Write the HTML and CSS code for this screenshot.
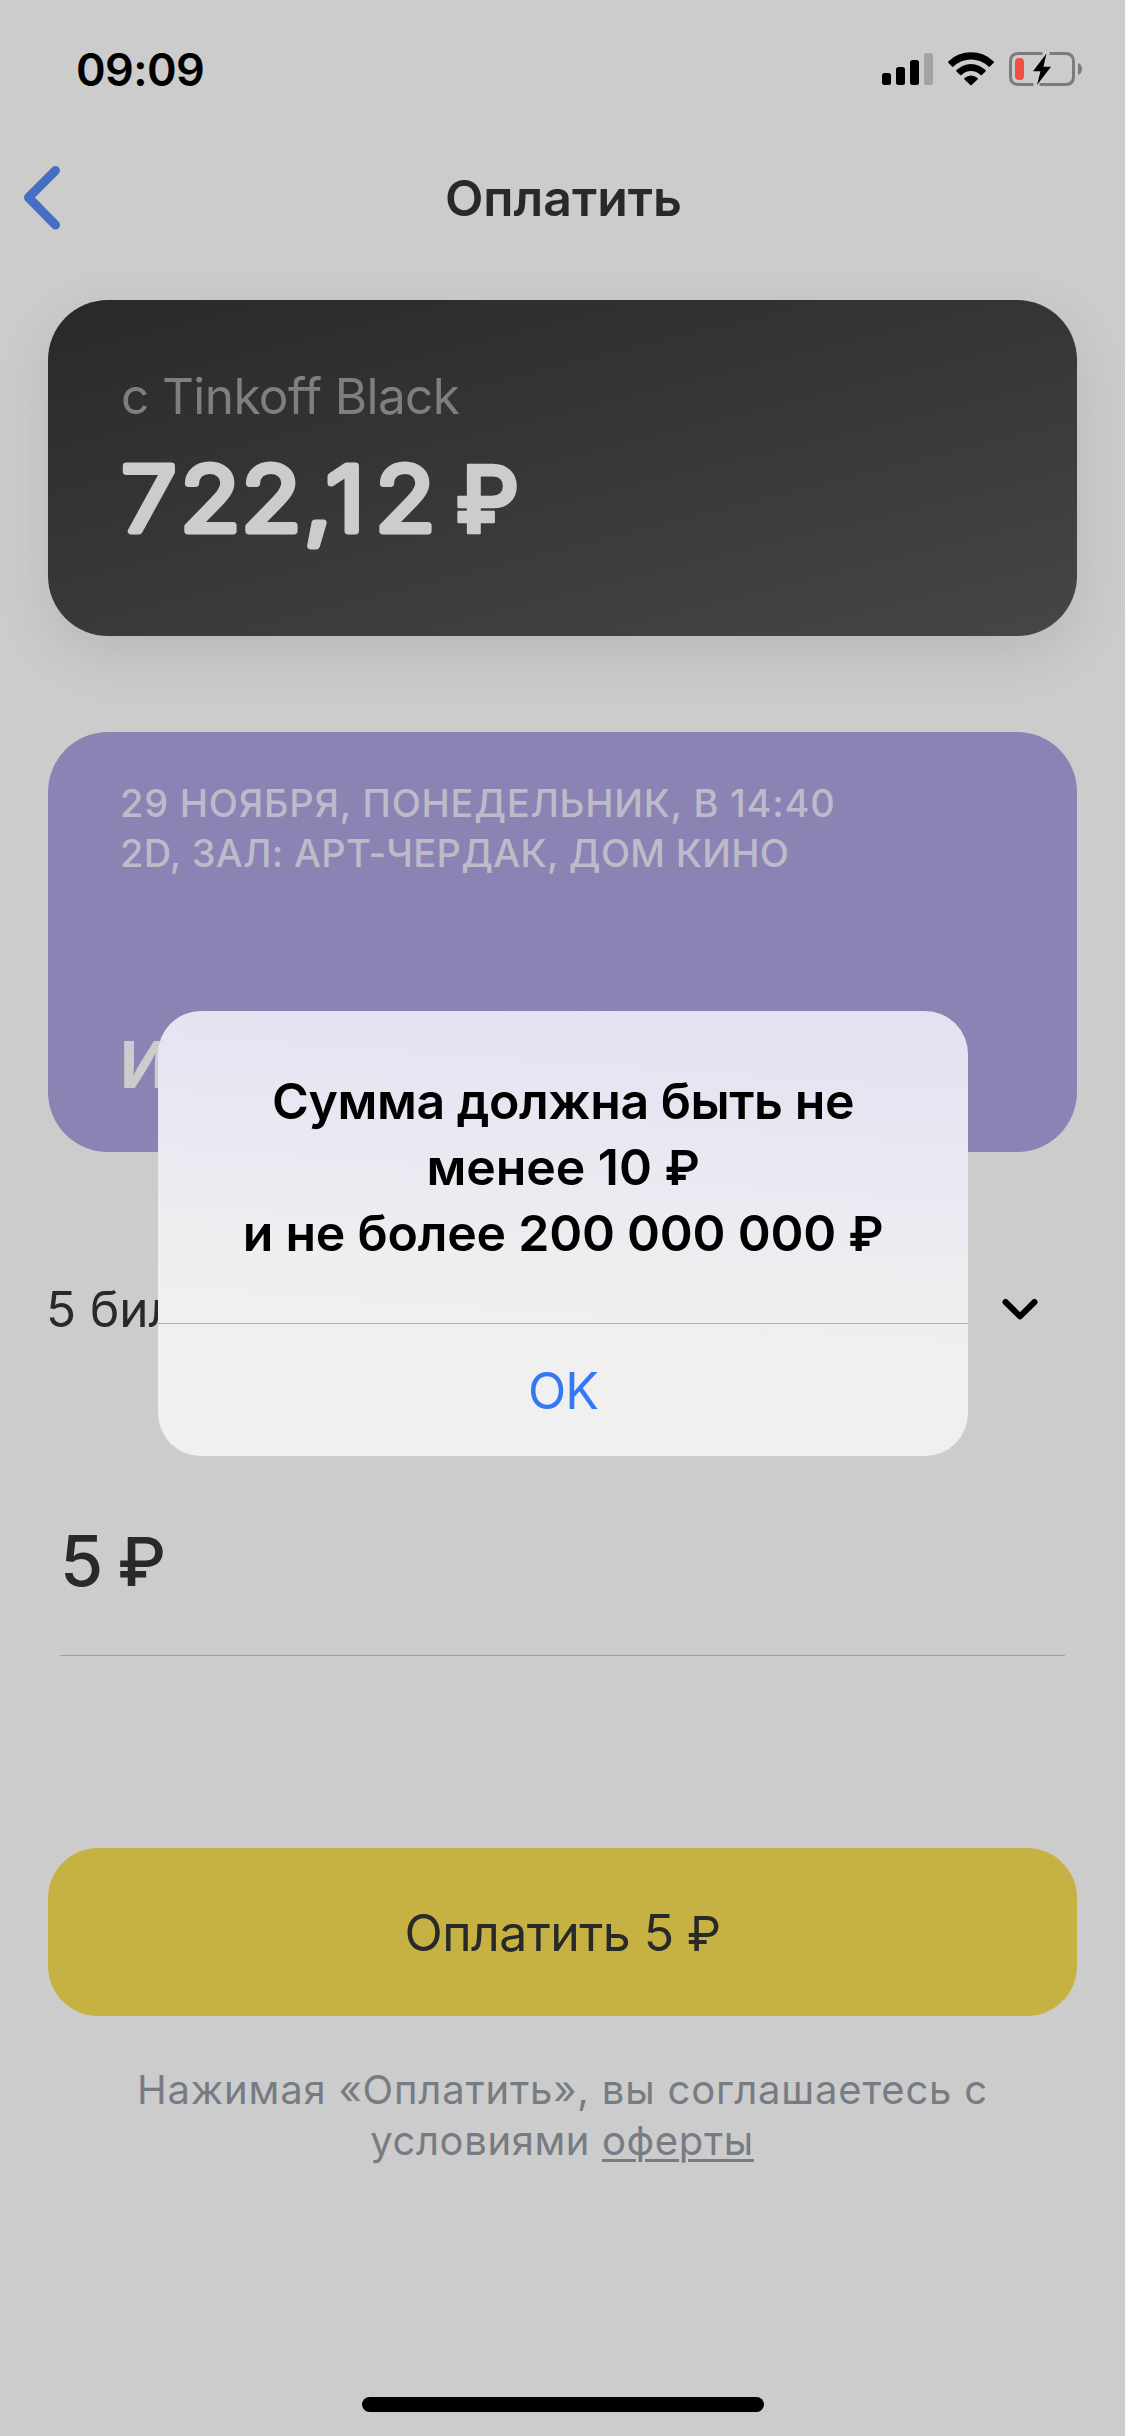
FILE: index.html
```html
<!DOCTYPE html>
<html lang="ru">
<head>
<meta charset="utf-8">
<title>Оплатить</title>
<link rel="stylesheet" href="styles.css">
</head>
<body>
<div class="screen">
  <div class="status">
    <span class="time">09:09</span>
    <svg class="status-icons" width="202" height="38" viewBox="0 0 202 38">
      <rect x="0" y="23" width="9" height="12" rx="2.5"/>
      <rect x="14" y="17" width="9" height="18" rx="2.5"/>
      <rect x="28" y="10" width="9" height="25" rx="2.5"/>
      <rect x="42" y="3" width="9" height="32" rx="2.5" fill="#a3a3a3"/>
      <path d="M66.3 11.400a32.500 32.500 0 0 1 45.4 0q.7.7 0 1.400l-3.800 3.800q-.7.7-1.400 0a25 25 0 0 0-35 0q-.7.7-1.400 0l-3.800-3.800q-.7-.7 0-1.400z"/>
      <path d="M74.500 20.100a20.500 20.500 0 0 1 29 0q.7.7 0 1.400l-3.600 3.500q-.7.7-1.400 0a13.500 13.500 0 0 0-19 0q-.7.7-1.400 0l-3.600-3.500q-.7-.7 0-1.400z"/>
      <path d="M82.500 28a9.600 9.600 0 0 1 13 0q.7.7 0 1.400l-5.800 5.600q-.7.7-1.400 0l-5.800-5.600q-.7-.7 0-1.400z"/>
      <path d="M160.500 3.500H136.500q-8 0-8 8v15q0 8 8 8H151.500M157.500 34.500h26q8 0 8-8v-15q0-8-8-8h-16" fill="none" stroke="#7c7c7c" stroke-width="3"/>
      <path d="M196 13q4 1.500 4 6t-4 6z" fill="#7c7c7c"/>
      <rect x="133" y="8" width="9" height="22" rx="4" fill="#f04e3e"/>
      <path d="M164.500 3.500L151 21.300h7.500L155 35 169 16.800h-7.600z"/>
    </svg>
  </div>

  <div class="nav">
    <svg class="back" width="44" height="66" viewBox="0 0 44 66">
      <path d="M35.500 5.500L8.500 32.500l27 27.500" fill="none" stroke="#446fc4" stroke-width="9" stroke-linecap="round" stroke-linejoin="round"/>
    </svg>
    <h1 class="title">Оплатить</h1>
  </div>

  <div class="card">
    <div class="card-label">с Tinkoff Black</div>
    <svg class="card-sum" width="440" height="140" viewBox="0 0 440 140">
      <text transform="scale(1.1 1)" y="105" x="1.300 54.800 110.200 167.600 187.200 232">722,12</text>
      <text class="card-ruble" transform="scale(.945 1)" x="354.300" y="107">₽</text>
    </svg>
  </div>

  <div class="ticket">
    <div>
      <div class="ticket-date">29 НОЯБРЯ, ПОНЕДЕЛЬНИК, В 14:40</div>
      <div class="ticket-hall">2D, ЗАЛ: АРТ-ЧЕРДАК, ДОМ КИНО</div>
    </div>
    <div class="ticket-name">И</div>
  </div>

  <div class="count">
    <span>5 билетов</span>
    <svg width="38" height="26" viewBox="0 0 38 26">
      <path d="M4.500 6L19 20.300 33.500 6" fill="none" stroke="#000" stroke-width="6" stroke-linecap="round" stroke-linejoin="round"/>
    </svg>
  </div>

  <div class="amount">5 <span class="ruble">₽</span></div>

  <div class="pay">Оплатить 5 <span class="ruble">₽</span></div>

  <div class="terms">
    <div class="terms-first">Нажимая «Оплатить», вы соглашаетесь с</div>
    <div class="terms-second">условиями <span class="link">оферты</span></div>
  </div>

  <div class="home"></div>

  <div class="dialog">
    <div class="dialog-text">
      <div class="line-a">Сумма должна быть не</div>
      <div class="line-b">менее 10 <span class="ruble">₽</span></div>
      <div class="line-c">и не более 200 000 000 <span class="ruble">₽</span></div>
    </div>
    <div class="dialog-ok">OK</div>
  </div>
</div>
</body>
</html>
```
FILE: styles.css
```css
* { box-sizing: border-box; }

body {
  margin: 0;
  background: #ccc;
  font-family: Inter, "Noto Sans", sans-serif;
  color: #292929;
}

.screen {
  position: relative;
  display: flex;
  flex-direction: column;
  width: 1125px;
  height: 2436px;
  background: #ccc;
  overflow: hidden;
}

.status {
  display: flex;
  justify-content: space-between;
  align-items: center;
  height: 138px;
  padding: 0 41px 0 76px;
  color: #000;
}
.time { font-size: 45px; font-weight: 600; letter-spacing: -0.6px; }

.nav {
  display: grid;
  grid-template-columns: 60px 1fr 60px;
  align-items: center;
  height: 120px;
}
.back { margin-left: 20px; }
.title {
  margin: 0;
  padding-left: 2px;
  font-size: 50px;
  font-weight: 600;
  line-height: 60px;
  text-align: center;
}

.card {
  height: 336px;
  margin: 42px 48px 0;
  padding: 66px 72px 0;
  border-radius: 60px;
  background: linear-gradient(166deg, #292929, #464646);
  box-shadow: 0 18px 60px rgba(0, 0, 0, 0.1);
}
.card-label {
  padding-left: 1px;
  font-size: 49.5px;
  line-height: 60px;
  letter-spacing: -0.6px;
  color: #7f7f7f;
}
.card-sum { display: block; }
.card-sum text {
  font-size: 89px;
  font-weight: 300;
  fill: #ccc;
  stroke: #ccc;
  stroke-width: 7px;
  stroke-linejoin: round;
  stroke-linecap: round;
}
.card-sum .card-ruble {
  font-size: 94px;
  font-weight: 600;
  stroke-width: 2.5px;
}

.ticket {
  display: flex;
  flex-direction: column;
  justify-content: space-between;
  height: 420px;
  margin: 96px 48px 0;
  padding: 46px 72px 49px;
  border-radius: 60px;
  background: #8b83b3;
  font-size: 38px;
  font-weight: 500;
  line-height: 50px;
  color: #bdbbc9;
}
.ticket-date { letter-spacing: 0.75px; }
.ticket-hall { letter-spacing: 0.3px; }
.ticket-name {
  font-size: 64px;
  font-weight: 700;
  line-height: 76px;
  color: #ccc;
}

.count {
  display: flex;
  justify-content: space-between;
  align-items: center;
  height: 100px;
  margin-top: 107px;
  padding: 0 86px 0 46px;
  font-size: 49.5px;
}

.ruble { font-size: 0.97em; line-height: 1; }

.amount {
  height: 156px;
  margin: 141px 60px 0;
  padding-top: 21px;
  border-bottom: 1px solid #a0a0a0;
  font-size: 70px;
  font-weight: 500;
  line-height: 80px;
  letter-spacing: -2.2px;
}

.pay {
  height: 168px;
  margin: 192px 48px 0;
  border-radius: 50px;
  background: #c6b243;
  font-size: 50px;
  line-height: 170px;
  letter-spacing: -0.57px;
  text-align: center;
}

.terms {
  margin-top: 48px;
  font-size: 40px;
  line-height: 51px;
  text-align: center;
  color: #777c84;
}
.terms-first { letter-spacing: 0.82px; }
.terms-second { padding-right: 1px; letter-spacing: 0.62px; }
.link {
  text-decoration: underline;
  text-decoration-thickness: 3px;
  text-underline-offset: 4px;
}

.home {
  width: 402px;
  height: 15px;
  margin: auto auto 24px 362px;
  border-radius: 8px;
  background: #000;
}

/* Alert lies over the payment form */
.dialog {
  position: absolute;
  left: 158px;
  top: 1011px;
  width: 810px;
  height: 445px;
  border-radius: 43px;
  background: linear-gradient(184deg, #e4e1f1 0%, #e9e7f2 30%, #efeff0 60%, #f0f0f0 100%);
  color: #000;
  text-align: center;
}
.dialog-text {
  height: 313px;
  padding-top: 57px;
  border-bottom: 1px solid #adadaf;
  font-size: 50px;
  font-weight: 600;
  line-height: 66px;
}
.line-a { letter-spacing: -0.45px; }
.line-b { letter-spacing: -0.06px; }
.line-c { letter-spacing: -0.23px; }
.dialog-ok {
  font-size: 50px;
  line-height: 134px;
  letter-spacing: -1px;
  color: #3478f6;
}
```
